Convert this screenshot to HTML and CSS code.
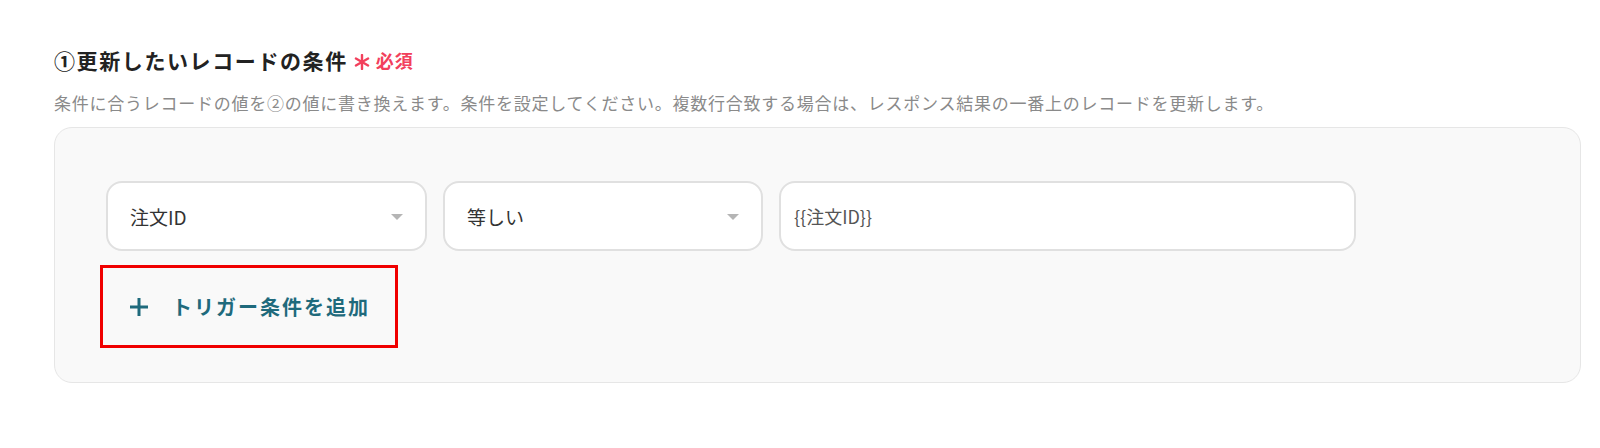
FILE: index.html
```html
<!DOCTYPE html>
<html lang="ja">
<head>
<meta charset="utf-8">
<link rel="stylesheet" href="styles.css">
</head>
<body>
<section class="field">
  <h2 class="title">①更新したいレコードの条件<span class="req"><svg class="ast" width="16" height="16" viewBox="0 0 16 16"><g stroke="#f2405c" stroke-width="2.4" stroke-linecap="round"><path d="M8 1v14"/><path d="M1.9 4.5l12.2 7"/><path d="M1.9 11.5l12.2-7"/></g></svg>必須</span></h2>
  <p class="desc">条件に合うレコードの値を②の値に書き換えます。条件を設定してください。複数行合致する場合は、レスポンス結果の一番上のレコードを更新します。</p>
  <div class="card">
    <div class="row">
      <div class="select s1"><span>注文ID</span><i class="caret"></i></div>
      <div class="select s2"><span>等しい</span><i class="caret"></i></div>
      <div class="input"><span>{{注文ID}}</span></div>
    </div>
    <div class="add">
      <svg class="plus" width="20" height="20" viewBox="0 0 20 20"><path d="M10 1v18M1 10h18" stroke="#1f6a7c" stroke-width="3" fill="none"/></svg>
      <span class="add-text">トリガー条件を追加</span>
    </div>
  </div>
</section>
</body>
</html>
```

FILE: styles.css
```css
* { box-sizing: border-box; }
html, body { margin: 0; padding: 0; background: #fff; }
body {
  font-family: "Noto Sans CJK JP", "Noto Sans", sans-serif;
  width: 1600px;
  height: 448px;
  overflow: hidden;
}
.field {
  padding: 46px 19px 0 54px;
}
.title {
  margin: 0;
  font-size: 21px;
  line-height: 28px;
  font-weight: 700;
  color: #222;
  letter-spacing: 1.6px;
  display: flex;
  align-items: center;
}
.req {
  display: inline-flex;
  align-items: center;
  color: #f2405c;
  font-size: 18px;
  letter-spacing: 1px;
  margin-left: 6px;
}
.ast {
  flex: none;
  margin-right: 6px;
  margin-top: 4px;
}
.desc {
  margin: 17px 0 0 0;
  font-size: 17px;
  line-height: 24px;
  color: #8a8a8a;
  letter-spacing: 0.75px;
}
.card {
  margin-top: 12px;
  background: #f9f9f9;
  border: 1.5px solid #e6e6e6;
  border-radius: 18px;
  height: 256px;
  padding: 53px 0 0 51px;
}
.row {
  display: flex;
  gap: 16px;
}
.select, .input {
  height: 70px;
  background: #fff;
  border: 2px solid #e0e0e0;
  border-radius: 16px;
  display: flex;
  align-items: center;
  padding: 0 22px;
  font-size: 19px;
  color: #333;
}
.select { justify-content: space-between; }
.s1 { width: 321px; }
.s2 { width: 320px; }
.input { width: 577px; color: #555; font-size: 18px; padding-left: 13px; }
.caret {
  width: 0; height: 0;
  border-left: 6px solid transparent;
  border-right: 6px solid transparent;
  border-top: 6px solid #b5b5b5;
  margin-top: 2px;
}
.add {
  margin: 14px 0 0 -6px;
  width: 298px;
  height: 83px;
  border: 3px solid #f00000;
  display: flex;
  align-items: center;
  padding-left: 26px;
}
.plus { flex: none; }
.add-text {
  margin-left: 23px;
  font-size: 20px;
  font-weight: 700;
  color: #1f6a7c;
  letter-spacing: 2px;
}
```
